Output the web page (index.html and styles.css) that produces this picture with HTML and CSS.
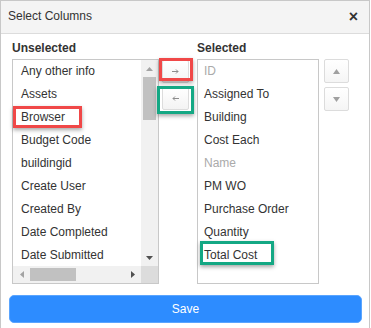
FILE: index.html
```html
<!DOCTYPE html>
<html>
<head>
  <meta charset="UTF-8">
  <title>Select Columns</title>
  <link rel="stylesheet" href="styles.css">
</head>
<body>
  <div class="dialog">
    <div class="dialog-header">
      <span class="dialog-title">Select Columns</span>
      <span class="dialog-close">&times;</span>
    </div>

    <div class="dialog-body">
      <div class="col col-unselected">
        <div class="col-label">Unselected</div>
        <div class="list-box list-scroll">
          <ul class="list-items">
            <li>Any other info</li>
            <li>Assets</li>
            <li>Browser</li>
            <li>Budget Code</li>
            <li>buildingid</li>
            <li>Create User</li>
            <li>Created By</li>
            <li>Date Completed</li>
            <li>Date Submitted</li>
          </ul>
          <div class="vscroll">
            <span class="sb-btn"><svg width="7" height="4" viewBox="0 0 7 4"><polygon points="3.5,0 7,4 0,4" fill="#a3a3a3"/></svg></span>
            <span class="sb-track"><span class="sb-thumb-v"></span></span>
            <span class="sb-btn"><svg width="7" height="4" viewBox="0 0 7 4"><polygon points="0,0 7,0 3.5,4" fill="#505050"/></svg></span>
          </div>
          <div class="hscroll">
            <span class="sb-btn"><svg width="4" height="7" viewBox="0 0 4 7"><polygon points="4,0 4,7 0,3.5" fill="#a3a3a3"/></svg></span>
            <span class="sb-track"><span class="sb-thumb-h"></span></span>
            <span class="sb-btn"><svg width="4" height="7" viewBox="0 0 4 7"><polygon points="0,0 4,3.5 0,7" fill="#505050"/></svg></span>
          </div>
          <div class="sb-corner"></div>
        </div>
      </div>

      <div class="col-move">
        <button class="btn-small"><svg width="7" height="5" viewBox="0 0 7 5"><path d="M0 2.5H6M4 0.5L6 2.5L4 4.5" stroke="#8c8c8c" fill="none"/></svg></button>
        <button class="btn-small"><svg width="7" height="5" viewBox="0 0 7 5"><path d="M7 2.5H1M3 0.5L1 2.5L3 4.5" stroke="#8c8c8c" fill="none"/></svg></button>
      </div>

      <div class="col col-selected">
        <div class="col-label">Selected</div>
        <div class="list-box">
          <ul class="list-items">
            <li class="muted">ID</li>
            <li>Assigned To</li>
            <li>Building</li>
            <li>Cost Each</li>
            <li class="muted">Name</li>
            <li>PM WO</li>
            <li>Purchase Order</li>
            <li>Quantity</li>
            <li>Total Cost</li>
          </ul>
        </div>
      </div>

      <div class="col-order">
        <button class="btn-order"><svg width="7" height="5" viewBox="0 0 7 5"><polygon points="3.5,0 7,5 0,5" fill="#a0a0a0"/></svg></button>
        <button class="btn-order"><svg width="7" height="5" viewBox="0 0 7 5"><polygon points="0,0 7,0 3.5,5" fill="#a0a0a0"/></svg></button>
      </div>
    </div>

    <div class="dialog-footer">
      <button class="btn-save">Save</button>
    </div>

    <!-- annotation boxes -->
    <div class="mark mark-red mark-add"></div>
    <div class="mark mark-green mark-remove"></div>
    <div class="mark mark-red mark-browser"></div>
    <div class="mark mark-green mark-total"></div>
  </div>
</body>
</html>
```

FILE: styles.css
```css
body {
  margin: 0;
  background: #fff;
  font-family: "Liberation Sans", Arial, sans-serif;
  font-size: 12px;
  color: #333;
}
ul {
  margin: 0;
  padding: 0;
  list-style: none;
}
button {
  font-family: inherit;
  padding: 0;
  cursor: pointer;
}

.dialog {
  position: relative;
  width: 370px;
  height: 334px;
  box-sizing: border-box;
  border: 1px solid #c8c8c8;
  background: #fff;
}

.dialog-header {
  height: 32px;
  display: flex;
  align-items: center;
  justify-content: space-between;
  padding: 0 11px 0 7px;
  background: #f4f4f4;
  border-bottom: 1px solid #dcdcdc;
}
.dialog-title {
  font-size: 12px;
  color: #333;
  margin-top: -3px;
}
.dialog-close {
  font-size: 16px;
  font-weight: bold;
  color: #333;
  line-height: 16px;
}

.dialog-body {
  display: flex;
  align-items: flex-start;
  padding: 0 11px;
}
.col-label {
  padding-top: 7px;
  margin-bottom: 3px;
  line-height: 15px;
  font-weight: bold;
  color: #333;
}
.col-unselected {
  width: 147px;
}
.col-selected {
  width: 122px;
}

.list-box {
  height: 225px;
  box-sizing: border-box;
  border: 1px solid #c8c8c8;
  overflow: hidden;
  background: #fff;
}
.list-scroll {
  display: grid;
  grid-template-columns: 1fr 17px;
  grid-template-rows: 1fr 17px;
}
.list-items {
  overflow: hidden;
}
.list-items li {
  height: 23px;
  line-height: 23px;
  white-space: nowrap;
  color: #333;
}
.list-scroll .list-items li {
  padding-left: 8px;
}
.col-selected .list-items li {
  padding-left: 6px;
}
.list-items li.muted {
  color: #aaa;
}

/* drawn scrollbars */
.vscroll, .hscroll {
  display: flex;
  background: #f1f1f1;
}
.vscroll {
  flex-direction: column;
}
.sb-btn {
  flex: 0 0 17px;
  height: 17px;
  display: flex;
  align-items: center;
  justify-content: center;
}
.sb-track {
  flex: 1;
  position: relative;
}
.sb-thumb-v {
  display: block;
  margin: 0 2px;
  height: 43px;
  background: #c1c1c1;
}
.sb-thumb-h {
  display: block;
  margin-top: 2px;
  width: 46px;
  height: 13px;
  background: #c1c1c1;
}
.sb-corner {
  background: #dcdcdc;
}

.col-move {
  width: 38px;
  padding-top: 26px;
  display: flex;
  flex-direction: column;
  align-items: flex-start;
  gap: 4px;
}
.btn-small {
  margin-left: 3px;
  width: 27px;
  height: 23px;
  border: 1px solid #dcdcdc;
  border-radius: 2px;
  background: linear-gradient(#fff, #f3f3f3);
  display: flex;
  align-items: center;
  justify-content: center;
}

.col-order {
  width: 30px;
  padding-top: 25px;
  display: flex;
  flex-direction: column;
  gap: 4px;
}
.btn-order {
  margin-left: 5px;
  width: 25px;
  height: 24px;
  border: 1px solid #dcdcdc;
  border-radius: 2px;
  background: linear-gradient(#fff, #f5f5f5);
  display: flex;
  align-items: center;
  justify-content: center;
}

.dialog-footer {
  padding: 11px 7px 0 8px;
}
.btn-save {
  width: 100%;
  height: 28px;
  border: 1px solid #5aa5ff;
  border-radius: 5px;
  background: #2d8cff;
  color: #fff;
  font-size: 12px;
}

/* annotation boxes */
.mark {
  position: absolute;
  box-sizing: border-box;
  border: 3px solid;
  box-shadow: 0 2px 4px rgba(0,0,0,0.35);
}
.mark-red {
  border-color: #f04848;
}
.mark-green {
  border-color: #14a884;
}
.mark-add {
  left: 158px;
  top: 57px;
  width: 34px;
  height: 23px;
}
.mark-remove {
  left: 156px;
  top: 85px;
  width: 37px;
  height: 28px;
}
.mark-browser {
  left: 12px;
  top: 105px;
  width: 69px;
  height: 22px;
}
.mark-total {
  left: 199px;
  top: 240px;
  width: 74px;
  height: 24px;
}
```
